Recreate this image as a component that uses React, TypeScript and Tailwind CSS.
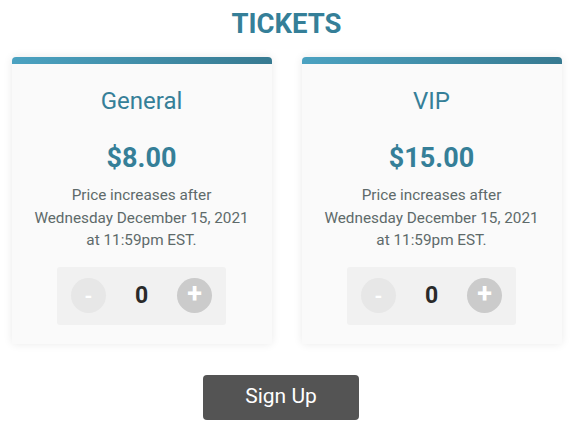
import React from "react";

function Card({ name, price }: { name: string; price: string }) {
  return (
    <div className="w-[260px] flex flex-col rounded-[4px] shadow-[0_0_10px_rgba(0,0,0,0.09)]">
      <div className="h-[7px] rounded-t-[4px] bg-gradient-to-r from-[#4ba2c1] to-[#377a91]" />
      <div className="flex flex-col items-center bg-[#fafafa] pt-[24px] pb-[19px]">
        <div className="text-[24px] leading-[26px] text-[#357f98]">{name}</div>
        <div className="mt-[30px] text-[27px] leading-[28px] font-bold text-[#357f98]">{price}</div>
        <div className="mt-[12px] text-[15.3px] leading-[22.5px] text-[#5e6a6a] text-center">
          Price increases after
          <br />
          Wednesday December 15, 2021
          <br />
          at 11:59pm EST.
        </div>
        <div className="mt-[15px] w-[169px] h-[58px] bg-[#f1f1f1] rounded-[3px] flex items-center justify-between px-[14px]">
          <div className="w-[35px] h-[35px] rounded-full bg-[#e7e7e7] flex items-center justify-center text-white text-[20px] font-bold leading-none">
            -
          </div>
          <div className="text-[23px] font-bold text-[#2a2a2a] leading-none">0</div>
          <div className="w-[35px] h-[35px] rounded-full bg-[#cbcbcb] flex items-center justify-center text-white text-[27px] font-bold leading-none pb-[2px]">
            +
          </div>
        </div>
      </div>
    </div>
  );
}

export default function App() {
  return (
    <div
      className="w-[573px] h-[433px] bg-white flex flex-col items-center pt-[10px]"
      style={{ fontFamily: "Roboto, 'Noto Sans', sans-serif" }}
    >
      <div className="text-[27.5px] leading-[28px] font-bold text-[#357f98]">TICKETS</div>
      <div className="mt-[19px] flex gap-[30px]">
        <Card name="General" price="$8.00" />
        <Card name="VIP" price="$15.00" />
      </div>
      <button className="mt-[31px] mr-[11px] w-[156px] h-[45px] rounded-[4px] bg-[#545454] text-white text-[21px]">
        Sign Up
      </button>
    </div>
  );
}
